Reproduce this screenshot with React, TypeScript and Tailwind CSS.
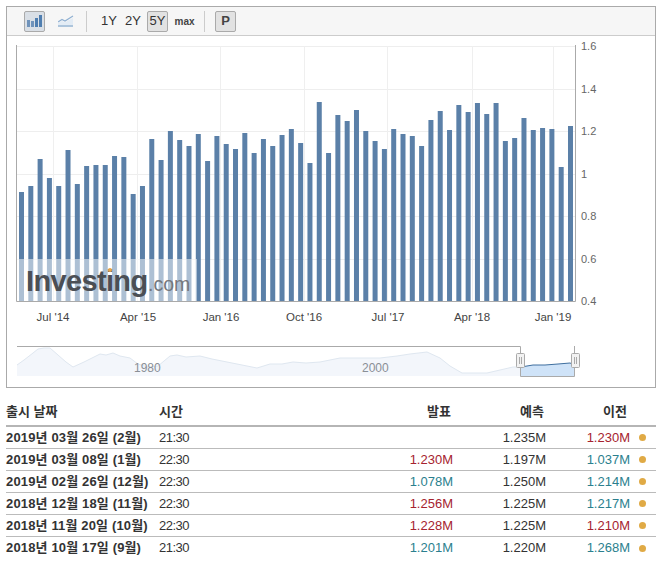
const barTops = [
  192, 186, 159, 178, 186, 150, 184, 166, 165, 165,
  156, 157, 194, 186, 139, 160, 131, 140, 146, 134,
  161, 136, 144, 149, 133, 153, 139, 146, 135, 129,
  143, 163, 102, 153, 115, 121, 110, 131, 141, 149,
  129, 134, 136, 146, 120, 111, 130, 105, 112, 103,
  114, 103, 141, 138, 118, 130, 128, 129, 167, 126,
]

const yLabels = [
  ["1.6", 46],
  ["1.4", 89],
  ["1.2", 131],
  ["1", 174],
  ["0.8", 216],
  ["0.6", 259],
  ["0.4", 301],
] as const

const xLabels = [
  ["Jul '14", 53],
  ["Apr '15", 138],
  ["Jan '16", 221],
  ["Oct '16", 304],
  ["Jul '17", 388],
  ["Apr '18", 472],
  ["Jan '19", 553],
] as const

const RED = "text-[#a6232f]"
const TEAL = "text-[#2b7f8e]"

const rows = [
  { date: "2019년 03월 26일 (2월)", time: "21:30", actual: "", actualColor: "", forecast: "1.235M", prev: "1.230M", prevColor: RED },
  { date: "2019년 03월 08일 (1월)", time: "22:30", actual: "1.230M", actualColor: RED, forecast: "1.197M", prev: "1.037M", prevColor: TEAL },
  { date: "2019년 02월 26일 (12월)", time: "22:30", actual: "1.078M", actualColor: TEAL, forecast: "1.250M", prev: "1.214M", prevColor: TEAL },
  { date: "2018년 12월 18일 (11월)", time: "22:30", actual: "1.256M", actualColor: RED, forecast: "1.225M", prev: "1.217M", prevColor: TEAL },
  { date: "2018년 11월 20일 (10월)", time: "22:30", actual: "1.228M", actualColor: RED, forecast: "1.225M", prev: "1.210M", prevColor: RED },
  { date: "2018년 10월 17일 (9월)", time: "21:30", actual: "1.201M", actualColor: TEAL, forecast: "1.220M", prev: "1.268M", prevColor: TEAL },
]

const columns = "grid grid-cols-[153px_141px_153px_93px_84px_26px]"

const navLine =
  "L24 360 L33 353 L38 349 L44 348 L50 348 L58 355 L66 362 L73 367 L84 362 L92 358 L100 354 L106 355 L113 353 L120 356 L130 358 L138 364 L148 367 L158 366 L170 356 L177 355 L186 357 L200 356 L212 359 L227 362 L242 365 L257 368 L270 364 L282 364 L293 362 L306 363 L320 362 L340 358 L363 358 L380 358 L397 356 L410 354 L427 352 L440 358 L450 366 L462 373 L487 373 L500 370 L513 367 L521 367"

function BarIcon() {
  return (
    <svg width="15" height="12" viewBox="0 0 15 12">
      <rect x="0" y="5" width="3" height="7" fill="#6f93bb" />
      <rect x="4" y="6" width="3" height="6" fill="#6f93bb" />
      <rect x="8" y="3" width="3" height="9" fill="#4f7eb0" />
      <rect x="12" y="0" width="3" height="12" fill="#4f7eb0" />
    </svg>
  )
}

function LineIcon() {
  return (
    <svg width="16" height="12" viewBox="0 0 16 12" fill="none">
      <path d="M0 7 L4 4.5 L7 6 L11 3.5 L15 1" stroke="#8fb0d2" strokeWidth="1.2" />
      <path d="M0 8 L4 6 L7 7.5 L11 5 L15 3 V10 H0 Z" fill="#e3ecf5" />
      <path d="M0 11 H15" stroke="#8fb0d2" strokeWidth="1.4" />
    </svg>
  )
}

function Chart() {
  return (
    <svg width="648" height="351" viewBox="7 36 648 351" className="block" fontFamily="'Liberation Sans', Arial, sans-serif">
      {[46, 89, 131, 174, 216, 259].map((y) => (
        <line key={y} x1="17" x2="575" y1={y + 0.5} y2={y + 0.5} stroke="#eeeeee" />
      ))}
      {[53, 137, 220, 304, 387, 472, 553].map((x) => (
        <line key={x} x1={x + 0.5} x2={x + 0.5} y1="46" y2="301" stroke="#efefef" />
      ))}

      {barTops.map((top, i) => (
        <rect key={i} x={19 + i * 9.305} y={top} width="5" height={301 - top} fill="#5b80a8" />
      ))}

      <rect x="17" y="259" width="180" height="42" fill="#ffffff" fillOpacity="0.5" />
      <text x="26" y="291" fontSize="29" fontWeight="700" letterSpacing="-0.65" fill="#4b4f55">Investing</text>
      <text x="148" y="291" fontSize="19.5" fill="#75787d">.com</text>
      <circle cx="110" cy="270" r="2" fill="#e9a64a" />

      <path d="M16.5 45 V301.5 H575.5 V45" fill="none" stroke="#aaaaaa" />

      {yLabels.map(([label, y]) => (
        <text key={label} x="581" y={y + 4} fontSize="11" fill="#666666">{label}</text>
      ))}
      {xLabels.map(([label, x]) => (
        <text key={label} x={x} y="321" fontSize="11.5" textAnchor="middle" fill="#444444">{label}</text>
      ))}

      <path d={`M17 376 V365 ${navLine} V376 Z`} fill="#f3f6fb" />
      <path d={`M17 365 ${navLine}`} fill="none" stroke="#dfe7f0" />
      <text x="134" y="372" fontSize="12" fill="#8a8f96">1980</text>
      <text x="362" y="372" fontSize="12" fill="#8a8f96">2000</text>

      <path d="M521 367 L533 365 L545 365 L558 364 L570 363 L575 365 V376 H521 Z" fill="#cfe3f8" />
      <path d="M521 367 L533 365 L545 365 L558 364 L570 363 L575 365" fill="none" stroke="#3f6f9f" />
      <path d="M17 346.5 H520.5 V376.5 H574.5 V346" fill="none" stroke="#aaaaaa" />

      {[516, 571].map((x) => (
        <g key={x}>
          <rect x={x + 0.5} y="353.5" width="8" height="14" rx="1" fill="#f2f2f2" stroke="#aaaaaa" />
          <path d={`M${x + 3.5} 357 V364 M${x + 5.5} 357 V364`} stroke="#aaaaaa" />
        </g>
      ))}
    </svg>
  )
}

export default function App() {
  return (
    <div className="w-[664px] h-[572px] bg-white pt-[6px] pl-[6px] text-[#333] font-['Liberation_Sans','Noto_Sans_CJK_KR',sans-serif]">
      <div className="w-[650px] border border-[#aaaaaa]">
        <div className="flex items-center h-[29px] pl-[17px] bg-[#f6f6f6] border-b border-[#cccccc]">
          <div className="flex items-center justify-center w-[21px] h-[21px] rounded-[2px] border border-[#aaaaaa] bg-[#d9dfe6]">
            <BarIcon />
          </div>
          <div className="flex items-center justify-center w-[18px] ml-[12px]">
            <LineIcon />
          </div>
          <div className="w-px h-[21px] ml-[11px] bg-[#cccccc]" />
          <span className="w-[16px] ml-[14px] text-[13px] text-center">1Y</span>
          <span className="w-[16px] ml-[8px] text-[13px] text-center">2Y</span>
          <div className="flex items-center justify-center w-[21px] h-[21px] ml-[6px] rounded-[2px] border border-[#aaaaaa] bg-[#e2e2e2] text-[13px]">
            5Y
          </div>
          <span className="w-[21px] ml-[6px] text-[10px] font-bold text-center text-[#444]">max</span>
          <div className="w-px h-[21px] ml-[9px] bg-[#cccccc]" />
          <div className="flex items-center justify-center w-[21px] h-[21px] ml-[10px] rounded-[2px] border border-[#aaaaaa] bg-[#e2e2e2] text-[13px] font-bold text-[#444]">
            P
          </div>
        </div>
        <Chart />
      </div>

      <div className="w-[650px] mt-[10px]">
        <div className={`${columns} items-center h-[29px] border-b-2 border-[#b5b5b5] text-[13px] font-bold`}>
          <div>출시 날짜</div>
          <div>시간</div>
          <div className="text-right pr-[2px]">발표</div>
          <div className="text-right pr-[2px]">예측</div>
          <div className="text-right pr-[3px]">이전</div>
          <div />
        </div>
        {rows.map((row, i) => (
          <div
            key={row.date}
            className={`${columns} items-center h-[22px] text-[13px] ${i < rows.length - 1 ? "border-b border-[#bbbbbb]" : ""}`}
          >
            <div className="font-bold whitespace-nowrap tracking-[0.15px]">{row.date}</div>
            <div className="tracking-[-0.5px]">{row.time}</div>
            <div className={`text-right ${row.actualColor}`}>{row.actual}</div>
            <div className="text-right">{row.forecast}</div>
            <div className={`text-right ${row.prevColor}`}>{row.prev}</div>
            <div className="pl-[9px]">
              <div className="w-[7px] h-[7px] rounded-full bg-[#e0aa45]" />
            </div>
          </div>
        ))}
      </div>
    </div>
  )
}
